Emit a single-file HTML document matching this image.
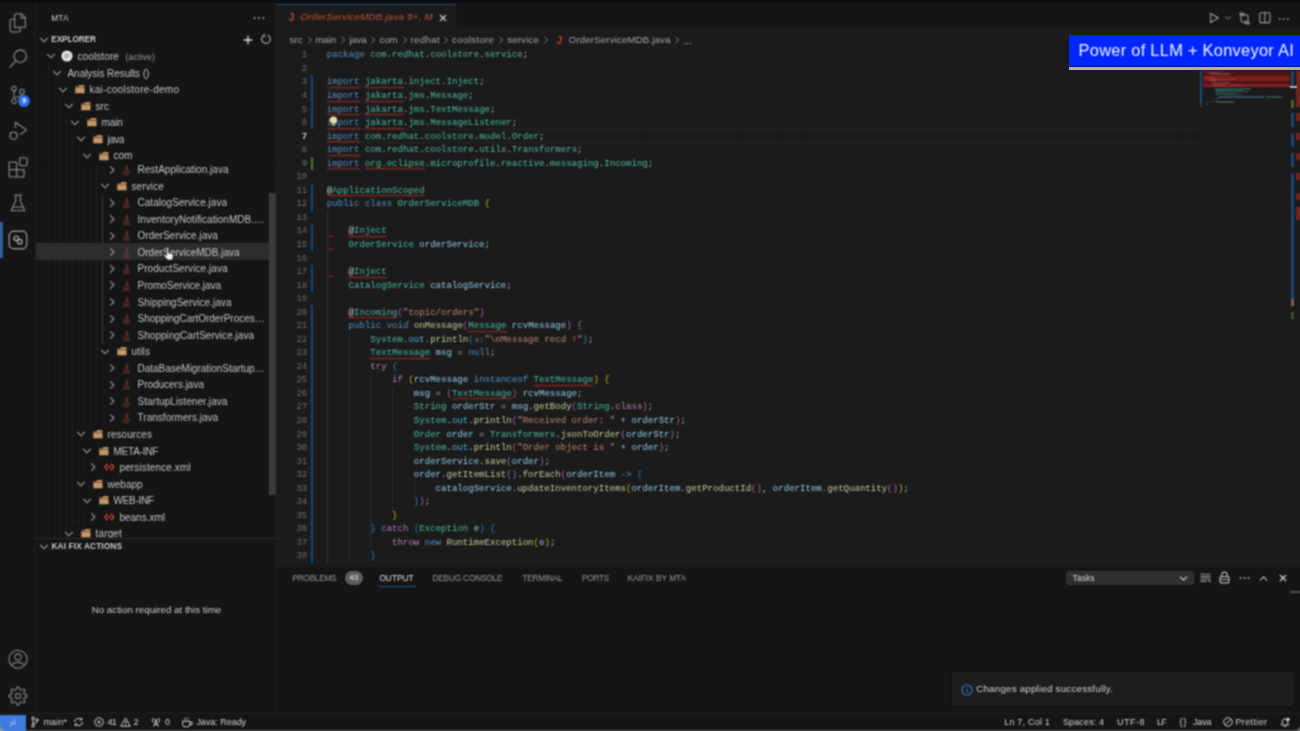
<!DOCTYPE html><html lang="en"><head><meta charset="utf-8"><title>OrderServiceMDB.java — kai-coolstore-demo</title><style>
*{box-sizing:border-box}
html,body{margin:0;padding:0}
#root{position:absolute;left:0;top:0;width:1300px;height:731px;overflow:hidden;filter:url(#bl)}
body{width:1300px;height:731px;overflow:hidden;position:relative;background:#1b1b1b;font-family:"Liberation Sans",sans-serif;color:#ccc;font-size:9.75px;line-height:1}
.abs{position:absolute}
.t{position:absolute;white-space:pre;line-height:12px;height:12px}
#act{left:0;top:3px;width:36px;height:711px;background:#151515;border-right:1px solid #1d1d1d}
#side{left:36px;top:3px;width:241px;height:711px;background:#151515;border-right:1px solid #1f1f1f;overflow:hidden}
#tabs{left:277px;top:3px;width:1023px;height:27px;background:#151515;border-bottom:1px solid #1d1d1d}
#tab{left:277px;top:4px;width:179px;height:26px;background:#1b1b1b;border-top:1.6px solid #154a7c;border-right:1px solid #1f1f1f}
#editor{left:277px;top:30px;width:1023px;height:536px;background:#1b1b1b;overflow:hidden}
#panel{left:277px;top:566px;width:1023px;height:148px;background:#151515;border-top:1px solid #1a1a1a}
#status{left:0;top:713px;width:1300px;height:18px;background:#151515;border-top:1px solid #1e1e1e}
.code{position:absolute;left:0;white-space:pre;opacity:.9;font-family:"Liberation Mono",monospace;font-size:9.07px;line-height:14px;height:14px;color:#c8c8c8}
.ln{position:absolute;width:30px;text-align:right;font-family:"Liberation Mono",monospace;font-size:9.07px;line-height:14px;height:14px;color:#666c74}
.k{color:#569cd6}.c{color:#c586c0}.ty{color:#4ec9b0}.v{color:#9cdcfe}.f{color:#dcdcaa}.s{color:#ce9178}.p{color:#ccc}
.b1{color:#dcbc10}.b2{color:#bc64b8}.b3{color:#1a8ce0}.n{color:#4fc1ff}
.sq{text-decoration:underline wavy #e5484d 1px;text-underline-offset:1.5px;text-decoration-skip-ink:none}
.ih{font-size:7.4px;color:#8a8a8a;background:#1f1f1f;border-radius:2px;padding:0 1px}
.row{position:absolute;left:0;width:240px;height:16.5px}
.row .lb{position:absolute;top:0;line-height:16.5px;white-space:pre;color:#ccc;font-size:9.75px}
svg{position:absolute;overflow:visible}
</style></head><body><svg width="0" height="0" style="position:absolute"><defs><filter id="bl" x="0" y="0" width="100%" height="100%" color-interpolation-filters="sRGB"><feConvolveMatrix order="3" kernelMatrix="0.0625 0.1250 0.0625 0.1250 0.2500 0.1250 0.0625 0.1250 0.0625" divisor="1" edgeMode="duplicate" preserveAlpha="true"/></filter></defs></svg><div id="root">
<div class="abs" style="left:0;top:0;width:1300px;height:3px;background:#0d0d0d"></div>
<div class="abs" id="act"><div class="abs" style="left:0;top:219px;width:2.5px;height:36px;background:#2a5f9a"></div>
<svg style="left:8.0px;top:9.0px" width="20" height="22" viewBox="0 0 20 22"><g fill="none" stroke="#7c7c7c" stroke-width="1.25" stroke-linejoin="round"><path d="M6.6 15.4 V3 a1.2 1.2 0 0 1 1.2 -1.2 h5.6 l4 4 v8.4 a1.2 1.2 0 0 1 -1.2 1.2 z"/><path d="M13.2 2 v4.2 h4.2"/><path d="M6.4 7 h-3 a1.2 1.2 0 0 0 -1.2 1.2 v10.4 a1.2 1.2 0 0 0 1.2 1.2 h7.6 a1.2 1.2 0 0 0 1.2 -1.2 V15.6"/></g></svg>
<svg style="left:8.0px;top:44.0px" width="22" height="22" viewBox="0 0 22 22"><g fill="none" stroke="#7c7c7c" stroke-width="1.3"><circle cx="12.3" cy="9.2" r="6.2"/><path d="M8 13.8 L2 20" stroke-linecap="round"/></g></svg>
<svg style="left:8.0px;top:81.0px" width="22" height="22" viewBox="0 0 22 22"><g fill="none" stroke="#7c7c7c" stroke-width="1.2"><circle cx="6" cy="4.6" r="2.3"/><circle cx="14" cy="7.7" r="2.3"/><circle cx="6" cy="17.3" r="2.3"/><path d="M6 7 V15 M14 10 c0 3.5 -8 2 -8 5"/></g></svg>
<div class="abs" style="left:18.3px;top:91.8px;width:12px;height:12px;border-radius:6px;background:#2f6fe6;color:#fff;font-size:7px;line-height:12px;text-align:center;font-weight:bold">9</div>
<svg style="left:8.0px;top:117.0px" width="22" height="22" viewBox="0 0 22 22"><g fill="none" stroke="#7c7c7c" stroke-width="1.3" stroke-linejoin="round"><path d="M7.4 8 V2.4 L18.6 10 L12 14.6"/><circle cx="5.6" cy="15.8" r="3.6"/><path d="M2 12.4 l1.4 1.2 M9.2 12.4 l-1.4 1.2 M1.4 16 h1 M9 16 h1"/></g></svg>
<svg style="left:8.0px;top:153.0px" width="22" height="22" viewBox="0 0 22 22"><g fill="none" stroke="#7c7c7c" stroke-width="1.3" stroke-linejoin="round"><rect x="11.6" y="1.8" width="7.6" height="7.8" rx="1.4"/><path d="M1.2 6.2 h7.4 v7.4 h7.4 v7.2 h-14.8z M1.2 13.6 h7.4 v7.2"/></g></svg>
<svg style="left:8.0px;top:189.0px" width="22" height="22" viewBox="0 0 22 22"><g fill="none" stroke="#7c7c7c" stroke-width="1.3" stroke-linejoin="round"><path d="M6.4 3.2 h7.2 M7.6 3.4 v5.6 l-4.4 9.6 h13.6 l-4.4 -9.6 v-5.6 M5 15.2 h10"/></g></svg>
<svg style="left:8.0px;top:227.0px" width="20" height="20" viewBox="0 0 20 20"><g fill="none" stroke="#8a8a8a" stroke-width="1.4"><rect x="1.3" y="1.3" width="17.4" height="17.4" rx="4"/></g><g fill="none" stroke="#b0b0b0" stroke-width="1.2"><circle cx="8.3" cy="8.3" r="2.3"/><circle cx="11.7" cy="11.7" r="2.3"/></g></svg>
<svg style="left:8.0px;top:646.0px" width="20" height="20" viewBox="0 0 20 20"><g fill="none" stroke="#7c7c7c" stroke-width="1.2"><circle cx="10" cy="10.3" r="9"/><circle cx="10" cy="8" r="3.2"/><path d="M3.8 16.6 c1.4 -4.4 11 -4.4 12.4 0"/></g></svg>
<svg style="left:8.0px;top:682.8px" width="20" height="20" viewBox="0 0 20 20"><g fill="none" stroke="#7c7c7c" stroke-width="1.2" stroke-linejoin="round"><polygon points="18.96,9.12 18.96,10.88 16.32,11.92 15.82,13.11 16.96,15.71 15.71,16.96 13.11,15.82 11.92,16.32 10.88,18.96 9.12,18.96 8.08,16.32 6.89,15.82 4.29,16.96 3.04,15.71 4.18,13.11 3.68,11.92 1.04,10.88 1.04,9.12 3.68,8.08 4.18,6.89 3.04,4.29 4.29,3.04 6.89,4.18 8.08,3.68 9.12,1.04 10.88,1.04 11.92,3.68 13.11,4.18 15.71,3.04 16.96,4.29 15.82,6.89 16.32,8.08"/><circle cx="10" cy="10" r="2.6"/></g></svg></div>
<div class="abs" id="side"><div class="abs" style="left:12.0px;top:61.5px;width:1px;height:473.5px;background:#1f1f1f"></div>
<div class="abs" style="left:18.0px;top:78.0px;width:1px;height:457.0px;background:#1f1f1f"></div>
<div class="abs" style="left:24.0px;top:94.7px;width:1px;height:440.3px;background:#1f1f1f"></div>
<div class="abs" style="left:30.0px;top:111.3px;width:1px;height:423.7px;background:#1f1f1f"></div>
<div class="abs" style="left:36.0px;top:127.8px;width:1px;height:394.2px;background:#1f1f1f"></div>
<div class="abs" style="left:42.0px;top:144.4px;width:1px;height:278.1px;background:#1f1f1f"></div>
<div class="abs" style="left:42.0px;top:439.0px;width:1px;height:33.0px;background:#1f1f1f"></div>
<div class="abs" style="left:42.0px;top:489.0px;width:1px;height:33.0px;background:#1f1f1f"></div>
<div class="abs" style="left:48.0px;top:161.0px;width:1px;height:261.5px;background:#1f1f1f"></div>
<div class="abs" style="left:48.0px;top:455.5px;width:1px;height:16.5px;background:#1f1f1f"></div>
<div class="abs" style="left:48.0px;top:505.5px;width:1px;height:16.5px;background:#1f1f1f"></div>
<div class="abs" style="left:54.0px;top:161.0px;width:1px;height:261.5px;background:#1f1f1f"></div>
<div class="abs" style="left:60.0px;top:161.0px;width:1px;height:261.5px;background:#1f1f1f"></div>
<div class="abs" style="left:66.0px;top:356.5px;width:1px;height:66.0px;background:#1f1f1f"></div>
<div class="abs" style="left:66.0px;top:191.5px;width:1px;height:149.0px;background:#3a3a3a"></div>
<div class="t" style="left:15.3px;top:9.6px;font-size:8.25px;color:#ccc;letter-spacing:.15px">MTA</div>
<svg style="left:217.0px;top:13.0px" width="12" height="4" viewBox="0 0 12 4"><circle cx="1.6" cy="2" r="0.9" fill="#aaa"/><circle cx="6" cy="2" r="0.9" fill="#aaa"/><circle cx="10.4" cy="2" r="0.9" fill="#aaa"/></svg>
<svg style="left:2.5px;top:32.6px" width="10" height="8" viewBox="0 0 10 8"><path d="M1.3 2 L5 5.8 L8.7 2" fill="none" stroke="#989898" stroke-width="1.1"/></svg>
<div class="t" style="left:15.3px;top:31.0px;font-size:8.25px;font-weight:bold;color:#ccc;letter-spacing:-0.11px">EXPLORER</div>
<svg style="left:206.5px;top:31.6px" width="10" height="10" viewBox="0 0 10 10"><path d="M5 0.8 V9.2 M0.8 5 H9.2" stroke="#ddd" stroke-width="1.3" fill="none"/></svg>
<svg style="left:223.5px;top:29.8px" width="12" height="12" viewBox="0 0 12 12"><path d="M7.6 2.1 A4.3 4.3 0 1 1 3.6 2.5" stroke="#aaa" stroke-width="1.1" fill="none"/><path d="M4.6 0.6 L3.3 2.8 L5.8 3.4" stroke="#aaa" stroke-width="1" fill="none"/></svg>
<div class="abs" style="left:0;top:240.3px;width:240px;height:16.6px;background:#2b2c2e"></div>
<div class="abs" style="left:0;top:160.0px;width:240px;height:375.0px;overflow:hidden">
<div class="abs" style="left:0;top:-160.0px;width:240px;height:600px">
<svg style="left:71.5px;top:161.5px" width="8" height="10" viewBox="0 0 8 10"><path d="M2.2 1.3 L5.9 5 L2.2 8.7" fill="none" stroke="#989898" stroke-width="1.1"/></svg><svg style="left:86.0px;top:161.0px" width="9" height="11" viewBox="0 0 9 11"><path d="M4.8 0.4 C6.2 2.2 2.8 3 4.2 5.4 M5.6 2.6 C6.8 3.8 4.4 4.4 5.4 6" fill="none" stroke="#8c3a2e" stroke-width="1"/><path d="M1.6 6.6 C3 7.3 6 7.3 7.4 6.6 M1.4 8.2 C3 9 6 9 7.6 8.2 M0.8 9.9 C3 10.8 6 10.8 8.2 9.9" fill="none" stroke="#7c382e" stroke-width="0.9"/></svg><div class="t" style="left:101.5px;top:161.1px;font-size:10px;color:#c4c4c4;letter-spacing:0.02px">RestApplication.java</div>
<svg style="left:63.5px;top:179.1px" width="10" height="8" viewBox="0 0 10 8"><path d="M1.3 2 L5 5.8 L8.7 2" fill="none" stroke="#989898" stroke-width="1.1"/></svg><svg style="left:80.7px;top:177.9px" width="10.2" height="10.2" viewBox="0 0 11 11"><path d="M0.3 2.6 h3.2 l1 -1.4 h5.6 v2.6 h-9.8z" fill="#b88c5e"/><path d="M0.3 4.2 h10 v5.8 h-10z" fill="#c59868"/><path d="M0.3 4 h10" stroke="#8a6a48" stroke-width="0.6"/></svg><div class="t" style="left:95.5px;top:177.7px;font-size:10px;color:#c4c4c4;letter-spacing:0.12px">service</div>
<svg style="left:71.5px;top:194.6px" width="8" height="10" viewBox="0 0 8 10"><path d="M2.2 1.3 L5.9 5 L2.2 8.7" fill="none" stroke="#989898" stroke-width="1.1"/></svg><svg style="left:86.0px;top:194.1px" width="9" height="11" viewBox="0 0 9 11"><path d="M4.8 0.4 C6.2 2.2 2.8 3 4.2 5.4 M5.6 2.6 C6.8 3.8 4.4 4.4 5.4 6" fill="none" stroke="#8c3a2e" stroke-width="1"/><path d="M1.6 6.6 C3 7.3 6 7.3 7.4 6.6 M1.4 8.2 C3 9 6 9 7.6 8.2 M0.8 9.9 C3 10.8 6 10.8 8.2 9.9" fill="none" stroke="#7c382e" stroke-width="0.9"/></svg><div class="t" style="left:101.5px;top:194.2px;font-size:10px;color:#c4c4c4;letter-spacing:0.03px">CatalogService.java</div>
<svg style="left:71.5px;top:211.2px" width="8" height="10" viewBox="0 0 8 10"><path d="M2.2 1.3 L5.9 5 L2.2 8.7" fill="none" stroke="#989898" stroke-width="1.1"/></svg><svg style="left:86.0px;top:210.7px" width="9" height="11" viewBox="0 0 9 11"><path d="M4.8 0.4 C6.2 2.2 2.8 3 4.2 5.4 M5.6 2.6 C6.8 3.8 4.4 4.4 5.4 6" fill="none" stroke="#8c3a2e" stroke-width="1"/><path d="M1.6 6.6 C3 7.3 6 7.3 7.4 6.6 M1.4 8.2 C3 9 6 9 7.6 8.2 M0.8 9.9 C3 10.8 6 10.8 8.2 9.9" fill="none" stroke="#7c382e" stroke-width="0.9"/></svg><div class="t" style="left:101.5px;top:210.8px;font-size:10px;color:#c4c4c4;letter-spacing:0.04px">InventoryNotificationMDB.…</div>
<svg style="left:71.5px;top:227.7px" width="8" height="10" viewBox="0 0 8 10"><path d="M2.2 1.3 L5.9 5 L2.2 8.7" fill="none" stroke="#989898" stroke-width="1.1"/></svg><svg style="left:86.0px;top:227.2px" width="9" height="11" viewBox="0 0 9 11"><path d="M4.8 0.4 C6.2 2.2 2.8 3 4.2 5.4 M5.6 2.6 C6.8 3.8 4.4 4.4 5.4 6" fill="none" stroke="#8c3a2e" stroke-width="1"/><path d="M1.6 6.6 C3 7.3 6 7.3 7.4 6.6 M1.4 8.2 C3 9 6 9 7.6 8.2 M0.8 9.9 C3 10.8 6 10.8 8.2 9.9" fill="none" stroke="#7c382e" stroke-width="0.9"/></svg><div class="t" style="left:101.5px;top:227.3px;font-size:10px;color:#c4c4c4;letter-spacing:0.02px">OrderService.java</div>
<svg style="left:71.5px;top:244.3px" width="8" height="10" viewBox="0 0 8 10"><path d="M2.2 1.3 L5.9 5 L2.2 8.7" fill="none" stroke="#989898" stroke-width="1.1"/></svg><svg style="left:86.0px;top:243.8px" width="9" height="11" viewBox="0 0 9 11"><path d="M4.8 0.4 C6.2 2.2 2.8 3 4.2 5.4 M5.6 2.6 C6.8 3.8 4.4 4.4 5.4 6" fill="none" stroke="#8c3a2e" stroke-width="1"/><path d="M1.6 6.6 C3 7.3 6 7.3 7.4 6.6 M1.4 8.2 C3 9 6 9 7.6 8.2 M0.8 9.9 C3 10.8 6 10.8 8.2 9.9" fill="none" stroke="#7c382e" stroke-width="0.9"/></svg><div class="t" style="left:101.5px;top:243.9px;font-size:10px;color:#c4c4c4;letter-spacing:-0.01px">OrderServiceMDB.java</div>
<svg style="left:71.5px;top:260.8px" width="8" height="10" viewBox="0 0 8 10"><path d="M2.2 1.3 L5.9 5 L2.2 8.7" fill="none" stroke="#989898" stroke-width="1.1"/></svg><svg style="left:86.0px;top:260.3px" width="9" height="11" viewBox="0 0 9 11"><path d="M4.8 0.4 C6.2 2.2 2.8 3 4.2 5.4 M5.6 2.6 C6.8 3.8 4.4 4.4 5.4 6" fill="none" stroke="#8c3a2e" stroke-width="1"/><path d="M1.6 6.6 C3 7.3 6 7.3 7.4 6.6 M1.4 8.2 C3 9 6 9 7.6 8.2 M0.8 9.9 C3 10.8 6 10.8 8.2 9.9" fill="none" stroke="#7c382e" stroke-width="0.9"/></svg><div class="t" style="left:101.5px;top:260.4px;font-size:10px;color:#c4c4c4;letter-spacing:0.06px">ProductService.java</div>
<svg style="left:71.5px;top:277.4px" width="8" height="10" viewBox="0 0 8 10"><path d="M2.2 1.3 L5.9 5 L2.2 8.7" fill="none" stroke="#989898" stroke-width="1.1"/></svg><svg style="left:86.0px;top:276.9px" width="9" height="11" viewBox="0 0 9 11"><path d="M4.8 0.4 C6.2 2.2 2.8 3 4.2 5.4 M5.6 2.6 C6.8 3.8 4.4 4.4 5.4 6" fill="none" stroke="#8c3a2e" stroke-width="1"/><path d="M1.6 6.6 C3 7.3 6 7.3 7.4 6.6 M1.4 8.2 C3 9 6 9 7.6 8.2 M0.8 9.9 C3 10.8 6 10.8 8.2 9.9" fill="none" stroke="#7c382e" stroke-width="0.9"/></svg><div class="t" style="left:101.5px;top:277.0px;font-size:10px;color:#c4c4c4;letter-spacing:-0.03px">PromoService.java</div>
<svg style="left:71.5px;top:293.9px" width="8" height="10" viewBox="0 0 8 10"><path d="M2.2 1.3 L5.9 5 L2.2 8.7" fill="none" stroke="#989898" stroke-width="1.1"/></svg><svg style="left:86.0px;top:293.4px" width="9" height="11" viewBox="0 0 9 11"><path d="M4.8 0.4 C6.2 2.2 2.8 3 4.2 5.4 M5.6 2.6 C6.8 3.8 4.4 4.4 5.4 6" fill="none" stroke="#8c3a2e" stroke-width="1"/><path d="M1.6 6.6 C3 7.3 6 7.3 7.4 6.6 M1.4 8.2 C3 9 6 9 7.6 8.2 M0.8 9.9 C3 10.8 6 10.8 8.2 9.9" fill="none" stroke="#7c382e" stroke-width="0.9"/></svg><div class="t" style="left:101.5px;top:293.5px;font-size:10px;color:#c4c4c4;letter-spacing:0.03px">ShippingService.java</div>
<svg style="left:71.5px;top:310.5px" width="8" height="10" viewBox="0 0 8 10"><path d="M2.2 1.3 L5.9 5 L2.2 8.7" fill="none" stroke="#989898" stroke-width="1.1"/></svg><svg style="left:86.0px;top:310.0px" width="9" height="11" viewBox="0 0 9 11"><path d="M4.8 0.4 C6.2 2.2 2.8 3 4.2 5.4 M5.6 2.6 C6.8 3.8 4.4 4.4 5.4 6" fill="none" stroke="#8c3a2e" stroke-width="1"/><path d="M1.6 6.6 C3 7.3 6 7.3 7.4 6.6 M1.4 8.2 C3 9 6 9 7.6 8.2 M0.8 9.9 C3 10.8 6 10.8 8.2 9.9" fill="none" stroke="#7c382e" stroke-width="0.9"/></svg><div class="t" style="left:101.5px;top:310.1px;font-size:10px;color:#c4c4c4;letter-spacing:-0.03px">ShoppingCartOrderProces…</div>
<svg style="left:71.5px;top:327.0px" width="8" height="10" viewBox="0 0 8 10"><path d="M2.2 1.3 L5.9 5 L2.2 8.7" fill="none" stroke="#989898" stroke-width="1.1"/></svg><svg style="left:86.0px;top:326.5px" width="9" height="11" viewBox="0 0 9 11"><path d="M4.8 0.4 C6.2 2.2 2.8 3 4.2 5.4 M5.6 2.6 C6.8 3.8 4.4 4.4 5.4 6" fill="none" stroke="#8c3a2e" stroke-width="1"/><path d="M1.6 6.6 C3 7.3 6 7.3 7.4 6.6 M1.4 8.2 C3 9 6 9 7.6 8.2 M0.8 9.9 C3 10.8 6 10.8 8.2 9.9" fill="none" stroke="#7c382e" stroke-width="0.9"/></svg><div class="t" style="left:101.5px;top:326.6px;font-size:10px;color:#c4c4c4;letter-spacing:0.04px">ShoppingCartService.java</div>
<svg style="left:63.5px;top:344.6px" width="10" height="8" viewBox="0 0 10 8"><path d="M1.3 2 L5 5.8 L8.7 2" fill="none" stroke="#989898" stroke-width="1.1"/></svg><svg style="left:80.7px;top:343.4px" width="10.2" height="10.2" viewBox="0 0 11 11"><path d="M0.3 2.6 h3.2 l1 -1.4 h5.6 v2.6 h-9.8z" fill="#b88c5e"/><path d="M0.3 4.2 h10 v5.8 h-10z" fill="#c59868"/><path d="M0.3 4 h10" stroke="#8a6a48" stroke-width="0.6"/></svg><div class="t" style="left:95.5px;top:343.2px;font-size:10px;color:#c4c4c4;letter-spacing:0.15px">utils</div>
<svg style="left:71.5px;top:360.1px" width="8" height="10" viewBox="0 0 8 10"><path d="M2.2 1.3 L5.9 5 L2.2 8.7" fill="none" stroke="#989898" stroke-width="1.1"/></svg><svg style="left:86.0px;top:359.6px" width="9" height="11" viewBox="0 0 9 11"><path d="M4.8 0.4 C6.2 2.2 2.8 3 4.2 5.4 M5.6 2.6 C6.8 3.8 4.4 4.4 5.4 6" fill="none" stroke="#8c3a2e" stroke-width="1"/><path d="M1.6 6.6 C3 7.3 6 7.3 7.4 6.6 M1.4 8.2 C3 9 6 9 7.6 8.2 M0.8 9.9 C3 10.8 6 10.8 8.2 9.9" fill="none" stroke="#7c382e" stroke-width="0.9"/></svg><div class="t" style="left:101.5px;top:359.7px;font-size:10px;color:#c4c4c4;letter-spacing:-0.01px">DataBaseMigrationStartup…</div>
<svg style="left:71.5px;top:376.7px" width="8" height="10" viewBox="0 0 8 10"><path d="M2.2 1.3 L5.9 5 L2.2 8.7" fill="none" stroke="#989898" stroke-width="1.1"/></svg><svg style="left:86.0px;top:376.2px" width="9" height="11" viewBox="0 0 9 11"><path d="M4.8 0.4 C6.2 2.2 2.8 3 4.2 5.4 M5.6 2.6 C6.8 3.8 4.4 4.4 5.4 6" fill="none" stroke="#8c3a2e" stroke-width="1"/><path d="M1.6 6.6 C3 7.3 6 7.3 7.4 6.6 M1.4 8.2 C3 9 6 9 7.6 8.2 M0.8 9.9 C3 10.8 6 10.8 8.2 9.9" fill="none" stroke="#7c382e" stroke-width="0.9"/></svg><div class="t" style="left:101.5px;top:376.3px;font-size:10px;color:#c4c4c4;letter-spacing:-0.02px">Producers.java</div>
<svg style="left:71.5px;top:393.2px" width="8" height="10" viewBox="0 0 8 10"><path d="M2.2 1.3 L5.9 5 L2.2 8.7" fill="none" stroke="#989898" stroke-width="1.1"/></svg><svg style="left:86.0px;top:392.7px" width="9" height="11" viewBox="0 0 9 11"><path d="M4.8 0.4 C6.2 2.2 2.8 3 4.2 5.4 M5.6 2.6 C6.8 3.8 4.4 4.4 5.4 6" fill="none" stroke="#8c3a2e" stroke-width="1"/><path d="M1.6 6.6 C3 7.3 6 7.3 7.4 6.6 M1.4 8.2 C3 9 6 9 7.6 8.2 M0.8 9.9 C3 10.8 6 10.8 8.2 9.9" fill="none" stroke="#7c382e" stroke-width="0.9"/></svg><div class="t" style="left:101.5px;top:392.8px;font-size:10px;color:#c4c4c4;letter-spacing:0.08px">StartupListener.java</div>
<svg style="left:71.5px;top:409.8px" width="8" height="10" viewBox="0 0 8 10"><path d="M2.2 1.3 L5.9 5 L2.2 8.7" fill="none" stroke="#989898" stroke-width="1.1"/></svg><svg style="left:86.0px;top:409.3px" width="9" height="11" viewBox="0 0 9 11"><path d="M4.8 0.4 C6.2 2.2 2.8 3 4.2 5.4 M5.6 2.6 C6.8 3.8 4.4 4.4 5.4 6" fill="none" stroke="#8c3a2e" stroke-width="1"/><path d="M1.6 6.6 C3 7.3 6 7.3 7.4 6.6 M1.4 8.2 C3 9 6 9 7.6 8.2 M0.8 9.9 C3 10.8 6 10.8 8.2 9.9" fill="none" stroke="#7c382e" stroke-width="0.9"/></svg><div class="t" style="left:101.5px;top:409.4px;font-size:10px;color:#c4c4c4;letter-spacing:0.03px">Transformers.java</div>
<svg style="left:39.5px;top:427.3px" width="10" height="8" viewBox="0 0 10 8"><path d="M1.3 2 L5 5.8 L8.7 2" fill="none" stroke="#989898" stroke-width="1.1"/></svg><svg style="left:56.7px;top:426.1px" width="10.2" height="10.2" viewBox="0 0 11 11"><path d="M0.3 2.6 h3.2 l1 -1.4 h5.6 v2.6 h-9.8z" fill="#b88c5e"/><path d="M0.3 4.2 h10 v5.8 h-10z" fill="#c59868"/><path d="M0.3 4 h10" stroke="#8a6a48" stroke-width="0.6"/></svg><div class="t" style="left:71.5px;top:425.9px;font-size:10px;color:#c4c4c4;letter-spacing:0.06px">resources</div>
<svg style="left:45.5px;top:443.9px" width="10" height="8" viewBox="0 0 10 8"><path d="M1.3 2 L5 5.8 L8.7 2" fill="none" stroke="#989898" stroke-width="1.1"/></svg><svg style="left:62.7px;top:442.7px" width="10.2" height="10.2" viewBox="0 0 11 11"><path d="M0.3 2.6 h3.2 l1 -1.4 h5.6 v2.6 h-9.8z" fill="#b88c5e"/><path d="M0.3 4.2 h10 v5.8 h-10z" fill="#c59868"/><path d="M0.3 4 h10" stroke="#8a6a48" stroke-width="0.6"/></svg><div class="t" style="left:77.5px;top:442.5px;font-size:10px;color:#c4c4c4;letter-spacing:-0.23px">META-INF</div>
<svg style="left:52.5px;top:459.4px" width="8" height="10" viewBox="0 0 8 10"><path d="M2.2 1.3 L5.9 5 L2.2 8.7" fill="none" stroke="#989898" stroke-width="1.1"/></svg><svg style="left:67.7px;top:460.4px" width="10.6" height="8" viewBox="0 0 12 8" preserveAspectRatio="none"><path d="M4.2 0.8 L1 4 L4.2 7.2 M7.8 0.8 L11 4 L7.8 7.2" fill="none" stroke="#d4402b" stroke-width="1.5"/><circle cx="6" cy="4" r="1.3" fill="#d4402b"/></svg><div class="t" style="left:83.5px;top:459.0px;font-size:10px;color:#c4c4c4;letter-spacing:0.12px">persistence.xml</div>
<svg style="left:39.5px;top:477.0px" width="10" height="8" viewBox="0 0 10 8"><path d="M1.3 2 L5 5.8 L8.7 2" fill="none" stroke="#989898" stroke-width="1.1"/></svg><svg style="left:56.7px;top:475.8px" width="10.2" height="10.2" viewBox="0 0 11 11"><path d="M0.3 2.6 h3.2 l1 -1.4 h5.6 v2.6 h-9.8z" fill="#b88c5e"/><path d="M0.3 4.2 h10 v5.8 h-10z" fill="#c59868"/><path d="M0.3 4 h10" stroke="#8a6a48" stroke-width="0.6"/></svg><div class="t" style="left:71.5px;top:475.6px;font-size:10px;color:#c4c4c4;letter-spacing:0.03px">webapp</div>
<svg style="left:45.5px;top:493.5px" width="10" height="8" viewBox="0 0 10 8"><path d="M1.3 2 L5 5.8 L8.7 2" fill="none" stroke="#989898" stroke-width="1.1"/></svg><svg style="left:62.7px;top:492.3px" width="10.2" height="10.2" viewBox="0 0 11 11"><path d="M0.3 2.6 h3.2 l1 -1.4 h5.6 v2.6 h-9.8z" fill="#b88c5e"/><path d="M0.3 4.2 h10 v5.8 h-10z" fill="#c59868"/><path d="M0.3 4 h10" stroke="#8a6a48" stroke-width="0.6"/></svg><div class="t" style="left:77.5px;top:492.1px;font-size:10px;color:#c4c4c4;letter-spacing:-0.30px">WEB-INF</div>
<svg style="left:52.5px;top:509.1px" width="8" height="10" viewBox="0 0 8 10"><path d="M2.2 1.3 L5.9 5 L2.2 8.7" fill="none" stroke="#989898" stroke-width="1.1"/></svg><svg style="left:67.7px;top:510.1px" width="10.6" height="8" viewBox="0 0 12 8" preserveAspectRatio="none"><path d="M4.2 0.8 L1 4 L4.2 7.2 M7.8 0.8 L11 4 L7.8 7.2" fill="none" stroke="#d4402b" stroke-width="1.5"/><circle cx="6" cy="4" r="1.3" fill="#d4402b"/></svg><div class="t" style="left:83.5px;top:508.7px;font-size:10px;color:#c4c4c4;letter-spacing:-0.02px">beans.xml</div>
<svg style="left:27.5px;top:526.6px" width="10" height="8" viewBox="0 0 10 8"><path d="M1.3 2 L5 5.8 L8.7 2" fill="none" stroke="#989898" stroke-width="1.1"/></svg><svg style="left:44.7px;top:525.4px" width="10.2" height="10.2" viewBox="0 0 11 11"><path d="M0.3 2.6 h3.2 l1 -1.4 h5.6 v2.6 h-9.8z" fill="#b88c5e"/><path d="M0.3 4.2 h10 v5.8 h-10z" fill="#c59868"/><path d="M0.3 4 h10" stroke="#8a6a48" stroke-width="0.6"/></svg><div class="t" style="left:59.5px;top:525.2px;font-size:10px;color:#c4c4c4;letter-spacing:0.16px">target</div>
</div></div>
<svg style="left:9.5px;top:49.3px" width="10" height="8" viewBox="0 0 10 8"><path d="M1.3 2 L5 5.8 L8.7 2" fill="none" stroke="#989898" stroke-width="1.1"/></svg><svg style="left:25.0px;top:47.3px" width="12" height="12" viewBox="0 0 12 12"><circle cx="6" cy="6" r="5.6" fill="#e4e4e4"/><path d="M3.6 4.6h4.8M3.6 6.2h4.8M3.6 7.8h3" stroke="#777" stroke-width="0.8"/></svg><div class="t" style="left:41.5px;top:47.9px;font-size:10px;color:#c4c4c4;letter-spacing:0.10px">coolstore</div><div class="t" style="left:89.4px;top:48.1px;font-size:8.8px;color:#9a9a9a;letter-spacing:0.11px">(active)</div>
<svg style="left:15.5px;top:65.9px" width="10" height="8" viewBox="0 0 10 8"><path d="M1.3 2 L5 5.8 L8.7 2" fill="none" stroke="#989898" stroke-width="1.1"/></svg><div class="t" style="left:31.5px;top:64.5px;font-size:10px;color:#c4c4c4;letter-spacing:-0.05px">Analysis Results ()</div>
<svg style="left:21.5px;top:82.5px" width="10" height="8" viewBox="0 0 10 8"><path d="M1.3 2 L5 5.8 L8.7 2" fill="none" stroke="#989898" stroke-width="1.1"/></svg><svg style="left:38.7px;top:81.3px" width="10.2" height="10.2" viewBox="0 0 11 11"><path d="M0.3 2.6 h3.2 l1 -1.4 h5.6 v2.6 h-9.8z" fill="#b88c5e"/><path d="M0.3 4.2 h10 v5.8 h-10z" fill="#c59868"/><path d="M0.3 4 h10" stroke="#8a6a48" stroke-width="0.6"/></svg><div class="t" style="left:53.5px;top:81.1px;font-size:10px;color:#c4c4c4;letter-spacing:0.26px">kai-coolstore-demo</div>
<svg style="left:27.5px;top:99.0px" width="10" height="8" viewBox="0 0 10 8"><path d="M1.3 2 L5 5.8 L8.7 2" fill="none" stroke="#989898" stroke-width="1.1"/></svg><svg style="left:44.7px;top:97.8px" width="10.2" height="10.2" viewBox="0 0 11 11"><path d="M0.3 2.6 h3.2 l1 -1.4 h5.6 v2.6 h-9.8z" fill="#b88c5e"/><path d="M0.3 4.2 h10 v5.8 h-10z" fill="#c59868"/><path d="M0.3 4 h10" stroke="#8a6a48" stroke-width="0.6"/></svg><div class="t" style="left:59.5px;top:97.6px;font-size:10px;color:#c4c4c4;letter-spacing:0.03px">src</div>
<svg style="left:33.5px;top:115.6px" width="10" height="8" viewBox="0 0 10 8"><path d="M1.3 2 L5 5.8 L8.7 2" fill="none" stroke="#989898" stroke-width="1.1"/></svg><svg style="left:50.7px;top:114.4px" width="10.2" height="10.2" viewBox="0 0 11 11"><path d="M0.3 2.6 h3.2 l1 -1.4 h5.6 v2.6 h-9.8z" fill="#b88c5e"/><path d="M0.3 4.2 h10 v5.8 h-10z" fill="#c59868"/><path d="M0.3 4 h10" stroke="#8a6a48" stroke-width="0.6"/></svg><div class="t" style="left:65.5px;top:114.2px;font-size:10px;color:#c4c4c4;letter-spacing:-0.10px">main</div>
<svg style="left:39.5px;top:132.2px" width="10" height="8" viewBox="0 0 10 8"><path d="M1.3 2 L5 5.8 L8.7 2" fill="none" stroke="#989898" stroke-width="1.1"/></svg><svg style="left:56.7px;top:131.0px" width="10.2" height="10.2" viewBox="0 0 11 11"><path d="M0.3 2.6 h3.2 l1 -1.4 h5.6 v2.6 h-9.8z" fill="#b88c5e"/><path d="M0.3 4.2 h10 v5.8 h-10z" fill="#c59868"/><path d="M0.3 4 h10" stroke="#8a6a48" stroke-width="0.6"/></svg><div class="t" style="left:71.5px;top:130.8px;font-size:10px;color:#c4c4c4;letter-spacing:-0.49px">java</div>
<svg style="left:45.5px;top:148.8px" width="10" height="8" viewBox="0 0 10 8"><path d="M1.3 2 L5 5.8 L8.7 2" fill="none" stroke="#989898" stroke-width="1.1"/></svg><svg style="left:62.7px;top:147.6px" width="10.2" height="10.2" viewBox="0 0 11 11"><path d="M0.3 2.6 h3.2 l1 -1.4 h5.6 v2.6 h-9.8z" fill="#b88c5e"/><path d="M0.3 4.2 h10 v5.8 h-10z" fill="#c59868"/><path d="M0.3 4 h10" stroke="#8a6a48" stroke-width="0.6"/></svg><div class="t" style="left:77.5px;top:147.4px;font-size:10px;color:#c4c4c4;letter-spacing:-0.00px">com</div>
<div class="abs" style="left:0;top:161.0px;width:240px;height:1px;background:#101010"></div>
<div class="abs" style="left:233px;top:190px;width:7px;height:302px;background:#3b3b3b"></div>
<div class="abs" style="left:0;top:535.0px;width:240px;height:1px;background:#2a2a2a"></div>
<svg style="left:2.5px;top:539.6px" width="10" height="8" viewBox="0 0 10 8"><path d="M1.3 2 L5 5.8 L8.7 2" fill="none" stroke="#989898" stroke-width="1.1"/></svg>
<div class="t" style="left:15.5px;top:537.6px;font-size:8.25px;font-weight:bold;color:#ccc;letter-spacing:0.14px">KAI FIX ACTIONS</div>
<div class="t" style="left:55.7px;top:600.7px;font-size:9.75px;color:#ccc">No action required at this time</div></div>
<div class="abs" id="tabs"></div>
<div class="abs" id="tab"><div class="t" style="left:11.6px;top:6.3px;font-size:10.6px;font-weight:bold;color:#c43c2e">J</div>
<div class="t" style="left:23.3px;top:6.2px;font-size:9.75px;font-style:italic;color:#c0503f;letter-spacing:0.21px">OrderServiceMDB.java 9+, M</div>
<svg style="left:161.7px;top:8.6px" width="8" height="8" viewBox="0 0 8 8"><path d="M1 1 L7 7 M7 1 L1 7" stroke="#d0d0d0" stroke-width="1.1" fill="none"/></svg></div>
<svg style="left:1208.0px;top:12.0px" width="12" height="12" viewBox="0 0 12 12"><path d="M2.6 1.6 V10.4 L10.4 6z" fill="none" stroke="#9c9c9c" stroke-width="1.1" stroke-linejoin="round"/></svg>
<svg style="left:1223.5px;top:15.0px" width="8" height="6" viewBox="0 0 8 6"><path d="M1.2 1.4 L4 4.2 L6.8 1.4" fill="none" stroke="#8a8a8a" stroke-width="1"/></svg>
<svg style="left:1237.5px;top:12.0px" width="13" height="13" viewBox="0 0 13 13"><g fill="none" stroke="#9c9c9c" stroke-width="1.1"><path d="M3 2.4 V8.6 a1.6 1.6 0 0 0 1.6 1.6 h3.6 M10 10.6 V4.4 a1.6 1.6 0 0 0 -1.6 -1.6 h-3.6"/><circle cx="3" cy="1.8" r="1.1"/><circle cx="10" cy="11.2" r="1.1"/><path d="M6.4 1 L4.6 2.8 L6.4 4.6 M6.6 8.4 L8.4 10.2 L6.6 12"/></g></svg>
<svg style="left:1258.5px;top:12.0px" width="12" height="12" viewBox="0 0 12 12"><g fill="none" stroke="#9c9c9c" stroke-width="1.1"><rect x="0.8" y="0.8" width="10.2" height="9.8" rx="1.2"/><path d="M5.9 0.8 V10.6"/></g></svg>
<svg style="left:1278.0px;top:16.5px" width="12" height="4" viewBox="0 0 12 4"><circle cx="1.6" cy="2" r="0.9" fill="#9c9c9c"/><circle cx="5.6" cy="2" r="0.9" fill="#9c9c9c"/><circle cx="9.6" cy="2" r="0.9" fill="#9c9c9c"/></svg>
<div class="abs" id="editor"><div class="abs" style="left:49.8px;top:99.47px;width:875px;height:13.54px;border-top:1px dashed #2c2c2c;border-bottom:1px dashed #2c2c2c"></div>
<div class="t" style="left:12.4px;top:4.1px;font-size:9.75px;color:#a4a4a4;letter-spacing:0.10px">src</div>
<div class="t" style="left:38.4px;top:4.1px;font-size:9.75px;color:#a4a4a4;letter-spacing:-0.15px">main</div>
<div class="t" style="left:72.4px;top:4.1px;font-size:9.75px;color:#a4a4a4;letter-spacing:-0.23px">java</div>
<div class="t" style="left:102.4px;top:4.1px;font-size:9.75px;color:#a4a4a4;letter-spacing:-0.11px">com</div>
<div class="t" style="left:133.4px;top:4.1px;font-size:9.75px;color:#a4a4a4;letter-spacing:0.31px">redhat</div>
<div class="t" style="left:175.1px;top:4.1px;font-size:9.75px;color:#a4a4a4;letter-spacing:0.28px">coolstore</div>
<div class="t" style="left:230.2px;top:4.1px;font-size:9.75px;color:#a4a4a4;letter-spacing:0.13px">service</div>
<div class="t" style="left:291.8px;top:4.1px;font-size:9.75px;color:#a4a4a4;letter-spacing:0.10px">OrderServiceMDB.java</div>
<svg style="left:30.0px;top:6.3px" width="6" height="8" viewBox="0 0 6 8"><path d="M1.4 0.8 L4.6 4 L1.4 7.2" fill="none" stroke="#8c8c8c" stroke-width="0.95"/></svg>
<svg style="left:63.0px;top:6.3px" width="6" height="8" viewBox="0 0 6 8"><path d="M1.4 0.8 L4.6 4 L1.4 7.2" fill="none" stroke="#8c8c8c" stroke-width="0.95"/></svg>
<svg style="left:93.0px;top:6.3px" width="6" height="8" viewBox="0 0 6 8"><path d="M1.4 0.8 L4.6 4 L1.4 7.2" fill="none" stroke="#8c8c8c" stroke-width="0.95"/></svg>
<svg style="left:125.0px;top:6.3px" width="6" height="8" viewBox="0 0 6 8"><path d="M1.4 0.8 L4.6 4 L1.4 7.2" fill="none" stroke="#8c8c8c" stroke-width="0.95"/></svg>
<svg style="left:166.0px;top:6.3px" width="6" height="8" viewBox="0 0 6 8"><path d="M1.4 0.8 L4.6 4 L1.4 7.2" fill="none" stroke="#8c8c8c" stroke-width="0.95"/></svg>
<svg style="left:221.0px;top:6.3px" width="6" height="8" viewBox="0 0 6 8"><path d="M1.4 0.8 L4.6 4 L1.4 7.2" fill="none" stroke="#8c8c8c" stroke-width="0.95"/></svg>
<svg style="left:266.0px;top:6.3px" width="6" height="8" viewBox="0 0 6 8"><path d="M1.4 0.8 L4.6 4 L1.4 7.2" fill="none" stroke="#8c8c8c" stroke-width="0.95"/></svg>
<svg style="left:397.4px;top:6.3px" width="6" height="8" viewBox="0 0 6 8"><path d="M1.4 0.8 L4.6 4 L1.4 7.2" fill="none" stroke="#8c8c8c" stroke-width="0.95"/></svg>
<div class="t" style="left:279.4px;top:4.0px;font-size:10.6px;font-weight:bold;color:#c43c2e">J</div>
<svg style="left:406.5px;top:11.8px" width="7.4" height="3" viewBox="0 0 9 3" preserveAspectRatio="none"><circle cx="1.2" cy="1.5" r="0.8" fill="#a0a0a0"/><circle cx="4.4" cy="1.5" r="0.8" fill="#a0a0a0"/><circle cx="7.6" cy="1.5" r="0.8" fill="#a0a0a0"/></svg>
<div class="abs" style="left:49.8px;top:180.71px;width:1px;height:352.04px;background:#343434"></div>
<div class="abs" style="left:71.6px;top:302.57px;width:1px;height:230.18px;background:#2c2c2c"></div>
<div class="abs" style="left:93.3px;top:343.19px;width:1px;height:176.02px;background:#2c2c2c"></div>
<div class="abs" style="left:115.1px;top:356.73px;width:1px;height:121.86px;background:#2c2c2c"></div>
<div class="abs" style="left:136.9px;top:451.51px;width:1px;height:13.54px;background:#2c2c2c"></div>
<div class="abs" style="left:33.6px;top:45.31px;width:2.6px;height:54.16px;background:#17466f"></div>
<div class="abs" style="left:33.6px;top:153.63px;width:2.6px;height:27.08px;background:#17466f"></div>
<div class="abs" style="left:33.6px;top:194.25px;width:2.6px;height:27.08px;background:#17466f"></div>
<div class="abs" style="left:33.6px;top:234.87px;width:2.6px;height:27.08px;background:#17466f"></div>
<div class="abs" style="left:33.6px;top:275.49px;width:2.6px;height:257.26px;background:#17466f"></div>
<div class="abs" style="left:33.6px;top:126.55px;width:2.6px;height:13.54px;background:#4a7236"></div>
<div class="ln" style="left:0.3px;top:18px;">1</div>
<div class="code" style="left:49.8px;top:18px"><span class="k">package</span><span class="p"> </span><span class="ty">com</span><span class="p">.</span><span class="ty">redhat</span><span class="p">.</span><span class="ty">coolstore</span><span class="p">.</span><span class="ty">service</span><span class="p">;</span></div>
<div class="ln" style="left:0.3px;top:32px;">2</div>
<div class="ln" style="left:0.3px;top:45px;">3</div>
<div class="code" style="left:49.8px;top:45px"><span class="k">import</span><span class="p"> </span><span class="ty">jakarta</span><span class="p">.</span><span class="ty">inject</span><span class="p">.</span><span class="ty">Inject</span><span class="p">;</span></div>
<svg style="left:49.5px;top:55.98px" width="33.6" height="3.2"><polyline points="0.0,0.7 1.5,2.5 3.0,0.7 4.5,2.5 6.0,0.7 7.5,2.5 9.0,0.7 10.5,2.5 12.0,0.7 13.5,2.5 15.0,0.7 16.5,2.5 18.0,0.7 19.5,2.5 21.0,0.7 22.5,2.5 24.0,0.7 25.5,2.5 27.0,0.7 28.5,2.5 30.0,0.7 31.5,2.5 33.0,0.7" fill="none" stroke="#b82e2a" stroke-width="0.85"/></svg>
<svg style="left:87.6px;top:55.98px" width="39.0" height="3.2"><polyline points="0.0,0.7 1.5,2.5 3.0,0.7 4.5,2.5 6.0,0.7 7.5,2.5 9.0,0.7 10.5,2.5 12.0,0.7 13.5,2.5 15.0,0.7 16.5,2.5 18.0,0.7 19.5,2.5 21.0,0.7 22.5,2.5 24.0,0.7 25.5,2.5 27.0,0.7 28.5,2.5 30.0,0.7 31.5,2.5 33.0,0.7 34.5,2.5 36.0,0.7 37.5,2.5 39.0,0.7" fill="none" stroke="#b82e2a" stroke-width="0.85"/></svg>
<div class="ln" style="left:0.3px;top:59px;">4</div>
<div class="code" style="left:49.8px;top:59px"><span class="k">import</span><span class="p"> </span><span class="ty">jakarta</span><span class="p">.</span><span class="ty">jms</span><span class="p">.</span><span class="ty">Message</span><span class="p">;</span></div>
<svg style="left:49.5px;top:69.52px" width="33.6" height="3.2"><polyline points="0.0,0.7 1.5,2.5 3.0,0.7 4.5,2.5 6.0,0.7 7.5,2.5 9.0,0.7 10.5,2.5 12.0,0.7 13.5,2.5 15.0,0.7 16.5,2.5 18.0,0.7 19.5,2.5 21.0,0.7 22.5,2.5 24.0,0.7 25.5,2.5 27.0,0.7 28.5,2.5 30.0,0.7 31.5,2.5 33.0,0.7" fill="none" stroke="#b82e2a" stroke-width="0.85"/></svg>
<svg style="left:87.6px;top:69.52px" width="39.0" height="3.2"><polyline points="0.0,0.7 1.5,2.5 3.0,0.7 4.5,2.5 6.0,0.7 7.5,2.5 9.0,0.7 10.5,2.5 12.0,0.7 13.5,2.5 15.0,0.7 16.5,2.5 18.0,0.7 19.5,2.5 21.0,0.7 22.5,2.5 24.0,0.7 25.5,2.5 27.0,0.7 28.5,2.5 30.0,0.7 31.5,2.5 33.0,0.7 34.5,2.5 36.0,0.7 37.5,2.5 39.0,0.7" fill="none" stroke="#b82e2a" stroke-width="0.85"/></svg>
<div class="ln" style="left:0.3px;top:73px;">5</div>
<div class="code" style="left:49.8px;top:73px"><span class="k">import</span><span class="p"> </span><span class="ty">jakarta</span><span class="p">.</span><span class="ty">jms</span><span class="p">.</span><span class="ty">TextMessage</span><span class="p">;</span></div>
<svg style="left:49.5px;top:83.06px" width="33.6" height="3.2"><polyline points="0.0,0.7 1.5,2.5 3.0,0.7 4.5,2.5 6.0,0.7 7.5,2.5 9.0,0.7 10.5,2.5 12.0,0.7 13.5,2.5 15.0,0.7 16.5,2.5 18.0,0.7 19.5,2.5 21.0,0.7 22.5,2.5 24.0,0.7 25.5,2.5 27.0,0.7 28.5,2.5 30.0,0.7 31.5,2.5 33.0,0.7" fill="none" stroke="#b82e2a" stroke-width="0.85"/></svg>
<svg style="left:87.6px;top:83.06px" width="39.0" height="3.2"><polyline points="0.0,0.7 1.5,2.5 3.0,0.7 4.5,2.5 6.0,0.7 7.5,2.5 9.0,0.7 10.5,2.5 12.0,0.7 13.5,2.5 15.0,0.7 16.5,2.5 18.0,0.7 19.5,2.5 21.0,0.7 22.5,2.5 24.0,0.7 25.5,2.5 27.0,0.7 28.5,2.5 30.0,0.7 31.5,2.5 33.0,0.7 34.5,2.5 36.0,0.7 37.5,2.5 39.0,0.7" fill="none" stroke="#b82e2a" stroke-width="0.85"/></svg>
<div class="ln" style="left:0.3px;top:86px;">6</div>
<div class="code" style="left:49.8px;top:86px"><span class="k">import</span><span class="p"> </span><span class="ty">jakarta</span><span class="p">.</span><span class="ty">jms</span><span class="p">.</span><span class="ty">MessageListener</span><span class="p">;</span></div>
<svg style="left:49.5px;top:96.60px" width="33.6" height="3.2"><polyline points="0.0,0.7 1.5,2.5 3.0,0.7 4.5,2.5 6.0,0.7 7.5,2.5 9.0,0.7 10.5,2.5 12.0,0.7 13.5,2.5 15.0,0.7 16.5,2.5 18.0,0.7 19.5,2.5 21.0,0.7 22.5,2.5 24.0,0.7 25.5,2.5 27.0,0.7 28.5,2.5 30.0,0.7 31.5,2.5 33.0,0.7" fill="none" stroke="#b82e2a" stroke-width="0.85"/></svg>
<svg style="left:87.6px;top:96.60px" width="39.0" height="3.2"><polyline points="0.0,0.7 1.5,2.5 3.0,0.7 4.5,2.5 6.0,0.7 7.5,2.5 9.0,0.7 10.5,2.5 12.0,0.7 13.5,2.5 15.0,0.7 16.5,2.5 18.0,0.7 19.5,2.5 21.0,0.7 22.5,2.5 24.0,0.7 25.5,2.5 27.0,0.7 28.5,2.5 30.0,0.7 31.5,2.5 33.0,0.7 34.5,2.5 36.0,0.7 37.5,2.5 39.0,0.7" fill="none" stroke="#b82e2a" stroke-width="0.85"/></svg>
<div class="ln" style="left:0.3px;top:100px;color:#ccc;font-weight:bold">7</div>
<div class="code" style="left:49.8px;top:100px"><span class="k">import</span><span class="p"> </span><span class="ty">com</span><span class="p">.</span><span class="ty">redhat</span><span class="p">.</span><span class="ty">coolstore</span><span class="p">.</span><span class="ty">model</span><span class="p">.</span><span class="ty">Order</span><span class="p">;</span></div>
<svg style="left:49.5px;top:110.14px" width="33.6" height="3.2"><polyline points="0.0,0.7 1.5,2.5 3.0,0.7 4.5,2.5 6.0,0.7 7.5,2.5 9.0,0.7 10.5,2.5 12.0,0.7 13.5,2.5 15.0,0.7 16.5,2.5 18.0,0.7 19.5,2.5 21.0,0.7 22.5,2.5 24.0,0.7 25.5,2.5 27.0,0.7 28.5,2.5 30.0,0.7 31.5,2.5 33.0,0.7" fill="none" stroke="#b82e2a" stroke-width="0.85"/></svg>
<div class="ln" style="left:0.3px;top:113px;">8</div>
<div class="code" style="left:49.8px;top:113px"><span class="k">import</span><span class="p"> </span><span class="ty">com</span><span class="p">.</span><span class="ty">redhat</span><span class="p">.</span><span class="ty">coolstore</span><span class="p">.</span><span class="ty">utils</span><span class="p">.</span><span class="ty">Transformers</span><span class="p">;</span></div>
<svg style="left:49.5px;top:123.68px" width="33.6" height="3.2"><polyline points="0.0,0.7 1.5,2.5 3.0,0.7 4.5,2.5 6.0,0.7 7.5,2.5 9.0,0.7 10.5,2.5 12.0,0.7 13.5,2.5 15.0,0.7 16.5,2.5 18.0,0.7 19.5,2.5 21.0,0.7 22.5,2.5 24.0,0.7 25.5,2.5 27.0,0.7 28.5,2.5 30.0,0.7 31.5,2.5 33.0,0.7" fill="none" stroke="#b82e2a" stroke-width="0.85"/></svg>
<div class="ln" style="left:0.3px;top:127px;">9</div>
<div class="code" style="left:49.8px;top:127px"><span class="k">import</span><span class="p"> </span><span class="ty">org.eclipse</span><span class="p">.</span><span class="ty">microprofile</span><span class="p">.</span><span class="ty">reactive</span><span class="p">.</span><span class="ty">messaging</span><span class="p">.</span><span class="ty">Incoming</span><span class="p">;</span></div>
<svg style="left:49.5px;top:137.22px" width="33.6" height="3.2"><polyline points="0.0,0.7 1.5,2.5 3.0,0.7 4.5,2.5 6.0,0.7 7.5,2.5 9.0,0.7 10.5,2.5 12.0,0.7 13.5,2.5 15.0,0.7 16.5,2.5 18.0,0.7 19.5,2.5 21.0,0.7 22.5,2.5 24.0,0.7 25.5,2.5 27.0,0.7 28.5,2.5 30.0,0.7 31.5,2.5 33.0,0.7" fill="none" stroke="#b82e2a" stroke-width="0.85"/></svg>
<svg style="left:87.6px;top:137.22px" width="60.8" height="3.2"><polyline points="0.0,0.7 1.5,2.5 3.0,0.7 4.5,2.5 6.0,0.7 7.5,2.5 9.0,0.7 10.5,2.5 12.0,0.7 13.5,2.5 15.0,0.7 16.5,2.5 18.0,0.7 19.5,2.5 21.0,0.7 22.5,2.5 24.0,0.7 25.5,2.5 27.0,0.7 28.5,2.5 30.0,0.7 31.5,2.5 33.0,0.7 34.5,2.5 36.0,0.7 37.5,2.5 39.0,0.7 40.5,2.5 42.0,0.7 43.5,2.5 45.0,0.7 46.5,2.5 48.0,0.7 49.5,2.5 51.0,0.7 52.5,2.5 54.0,0.7 55.5,2.5 57.0,0.7 58.5,2.5 60.0,0.7" fill="none" stroke="#b82e2a" stroke-width="0.85"/></svg>
<div class="ln" style="left:0.3px;top:140px;">10</div>
<div class="ln" style="left:0.3px;top:154px;">11</div>
<div class="code" style="left:49.8px;top:154px"><span class="p">@</span><span class="ty">ApplicationScoped</span></div>
<svg style="left:49.5px;top:164.30px" width="6.3" height="3.2"><polyline points="0.0,0.7 1.5,2.5 3.0,0.7 4.5,2.5 6.0,0.7" fill="none" stroke="#b82e2a" stroke-width="0.85"/></svg>
<svg style="left:54.9px;top:164.30px" width="93.4" height="3.2"><polyline points="0.0,0.7 1.5,2.5 3.0,0.7 4.5,2.5 6.0,0.7 7.5,2.5 9.0,0.7 10.5,2.5 12.0,0.7 13.5,2.5 15.0,0.7 16.5,2.5 18.0,0.7 19.5,2.5 21.0,0.7 22.5,2.5 24.0,0.7 25.5,2.5 27.0,0.7 28.5,2.5 30.0,0.7 31.5,2.5 33.0,0.7 34.5,2.5 36.0,0.7 37.5,2.5 39.0,0.7 40.5,2.5 42.0,0.7 43.5,2.5 45.0,0.7 46.5,2.5 48.0,0.7 49.5,2.5 51.0,0.7 52.5,2.5 54.0,0.7 55.5,2.5 57.0,0.7 58.5,2.5 60.0,0.7 61.5,2.5 63.0,0.7 64.5,2.5 66.0,0.7 67.5,2.5 69.0,0.7 70.5,2.5 72.0,0.7 73.5,2.5 75.0,0.7 76.5,2.5 78.0,0.7 79.5,2.5 81.0,0.7 82.5,2.5 84.0,0.7 85.5,2.5 87.0,0.7 88.5,2.5 90.0,0.7 91.5,2.5 93.0,0.7" fill="none" stroke="#b82e2a" stroke-width="0.85"/></svg>
<div class="ln" style="left:0.3px;top:167px;">12</div>
<div class="code" style="left:49.8px;top:167px"><span class="k">public</span><span class="p"> </span><span class="k">class</span><span class="p"> </span><span class="ty">OrderServiceMDB</span><span class="p"> </span><span class="b1">{</span></div>
<div class="ln" style="left:0.3px;top:181px;">13</div>
<div class="ln" style="left:0.3px;top:194px;">14</div>
<div class="code" style="left:49.8px;top:194px"><span class="p">    </span><span class="p">@</span><span class="ty">Inject</span></div>
<svg style="left:71.3px;top:204.92px" width="6.3" height="3.2"><polyline points="0.0,0.7 1.5,2.5 3.0,0.7 4.5,2.5 6.0,0.7" fill="none" stroke="#b82e2a" stroke-width="0.85"/></svg>
<svg style="left:76.7px;top:204.92px" width="33.6" height="3.2"><polyline points="0.0,0.7 1.5,2.5 3.0,0.7 4.5,2.5 6.0,0.7 7.5,2.5 9.0,0.7 10.5,2.5 12.0,0.7 13.5,2.5 15.0,0.7 16.5,2.5 18.0,0.7 19.5,2.5 21.0,0.7 22.5,2.5 24.0,0.7 25.5,2.5 27.0,0.7 28.5,2.5 30.0,0.7 31.5,2.5 33.0,0.7" fill="none" stroke="#b82e2a" stroke-width="0.85"/></svg>
<div class="ln" style="left:0.3px;top:208px;">15</div>
<div class="code" style="left:49.8px;top:208px"><span class="p">    </span><span class="ty">OrderService</span><span class="p"> </span><span class="v">orderService</span><span class="p">;</span></div>
<div class="ln" style="left:0.3px;top:222px;">16</div>
<div class="ln" style="left:0.3px;top:235px;">17</div>
<div class="code" style="left:49.8px;top:235px"><span class="p">    </span><span class="p">@</span><span class="ty">Inject</span></div>
<svg style="left:71.3px;top:245.54px" width="6.3" height="3.2"><polyline points="0.0,0.7 1.5,2.5 3.0,0.7 4.5,2.5 6.0,0.7" fill="none" stroke="#b82e2a" stroke-width="0.85"/></svg>
<svg style="left:76.7px;top:245.54px" width="33.6" height="3.2"><polyline points="0.0,0.7 1.5,2.5 3.0,0.7 4.5,2.5 6.0,0.7 7.5,2.5 9.0,0.7 10.5,2.5 12.0,0.7 13.5,2.5 15.0,0.7 16.5,2.5 18.0,0.7 19.5,2.5 21.0,0.7 22.5,2.5 24.0,0.7 25.5,2.5 27.0,0.7 28.5,2.5 30.0,0.7 31.5,2.5 33.0,0.7" fill="none" stroke="#b82e2a" stroke-width="0.85"/></svg>
<div class="ln" style="left:0.3px;top:249px;">18</div>
<div class="code" style="left:49.8px;top:249px"><span class="p">    </span><span class="ty">CatalogService</span><span class="p"> </span><span class="v">catalogService</span><span class="p">;</span></div>
<div class="ln" style="left:0.3px;top:262px;">19</div>
<div class="ln" style="left:0.3px;top:276px;">20</div>
<div class="code" style="left:49.8px;top:276px"><span class="p">    </span><span class="p">@</span><span class="ty">Incoming</span><span class="b2">(</span><span class="s">&quot;topic/orders&quot;</span><span class="b2">)</span></div>
<svg style="left:71.3px;top:286.16px" width="6.3" height="3.2"><polyline points="0.0,0.7 1.5,2.5 3.0,0.7 4.5,2.5 6.0,0.7" fill="none" stroke="#b82e2a" stroke-width="0.85"/></svg>
<svg style="left:76.7px;top:286.16px" width="44.4" height="3.2"><polyline points="0.0,0.7 1.5,2.5 3.0,0.7 4.5,2.5 6.0,0.7 7.5,2.5 9.0,0.7 10.5,2.5 12.0,0.7 13.5,2.5 15.0,0.7 16.5,2.5 18.0,0.7 19.5,2.5 21.0,0.7 22.5,2.5 24.0,0.7 25.5,2.5 27.0,0.7 28.5,2.5 30.0,0.7 31.5,2.5 33.0,0.7 34.5,2.5 36.0,0.7 37.5,2.5 39.0,0.7 40.5,2.5 42.0,0.7 43.5,2.5" fill="none" stroke="#b82e2a" stroke-width="0.85"/></svg>
<div class="ln" style="left:0.3px;top:289px;">21</div>
<div class="code" style="left:49.8px;top:289px"><span class="p">    </span><span class="k">public</span><span class="p"> </span><span class="k">void</span><span class="p"> </span><span class="f">onMessage</span><span class="b2">(</span><span class="ty">Message</span><span class="p"> </span><span class="v">rcvMessage</span><span class="b2">)</span><span class="p"> </span><span class="b2">{</span></div>
<svg style="left:191.0px;top:299.70px" width="39.0" height="3.2"><polyline points="0.0,0.7 1.5,2.5 3.0,0.7 4.5,2.5 6.0,0.7 7.5,2.5 9.0,0.7 10.5,2.5 12.0,0.7 13.5,2.5 15.0,0.7 16.5,2.5 18.0,0.7 19.5,2.5 21.0,0.7 22.5,2.5 24.0,0.7 25.5,2.5 27.0,0.7 28.5,2.5 30.0,0.7 31.5,2.5 33.0,0.7 34.5,2.5 36.0,0.7 37.5,2.5 39.0,0.7" fill="none" stroke="#b82e2a" stroke-width="0.85"/></svg>
<div class="ln" style="left:0.3px;top:303px;">22</div>
<div class="code" style="left:49.8px;top:303px"><span class="p">        </span><span class="ty">System</span><span class="p">.</span><span class="n">out</span><span class="p">.</span><span class="f">println</span><span class="b3">(</span><span class="ih">x:</span><span class="s">&quot;\nMessage recd !&quot;</span><span class="b3">)</span><span class="p">;</span></div>
<div class="ln" style="left:0.3px;top:316px;">23</div>
<div class="code" style="left:49.8px;top:316px"><span class="p">        </span><span class="ty">TextMessage</span><span class="p"> </span><span class="v">msg</span><span class="p"> = </span><span class="k">null</span><span class="p">;</span></div>
<svg style="left:93.0px;top:326.78px" width="60.8" height="3.2"><polyline points="0.0,0.7 1.5,2.5 3.0,0.7 4.5,2.5 6.0,0.7 7.5,2.5 9.0,0.7 10.5,2.5 12.0,0.7 13.5,2.5 15.0,0.7 16.5,2.5 18.0,0.7 19.5,2.5 21.0,0.7 22.5,2.5 24.0,0.7 25.5,2.5 27.0,0.7 28.5,2.5 30.0,0.7 31.5,2.5 33.0,0.7 34.5,2.5 36.0,0.7 37.5,2.5 39.0,0.7 40.5,2.5 42.0,0.7 43.5,2.5 45.0,0.7 46.5,2.5 48.0,0.7 49.5,2.5 51.0,0.7 52.5,2.5 54.0,0.7 55.5,2.5 57.0,0.7 58.5,2.5 60.0,0.7" fill="none" stroke="#b82e2a" stroke-width="0.85"/></svg>
<div class="ln" style="left:0.3px;top:330px;">24</div>
<div class="code" style="left:49.8px;top:330px"><span class="p">        </span><span class="c">try</span><span class="p"> </span><span class="b3">{</span></div>
<div class="ln" style="left:0.3px;top:343px;">25</div>
<div class="code" style="left:49.8px;top:343px"><span class="p">            </span><span class="c">if</span><span class="p"> </span><span class="b1">(</span><span class="v">rcvMessage</span><span class="p"> </span><span class="k">instanceof</span><span class="p"> </span><span class="ty">TextMessage</span><span class="b1">)</span><span class="p"> </span><span class="b1">{</span></div>
<svg style="left:256.3px;top:353.86px" width="60.8" height="3.2"><polyline points="0.0,0.7 1.5,2.5 3.0,0.7 4.5,2.5 6.0,0.7 7.5,2.5 9.0,0.7 10.5,2.5 12.0,0.7 13.5,2.5 15.0,0.7 16.5,2.5 18.0,0.7 19.5,2.5 21.0,0.7 22.5,2.5 24.0,0.7 25.5,2.5 27.0,0.7 28.5,2.5 30.0,0.7 31.5,2.5 33.0,0.7 34.5,2.5 36.0,0.7 37.5,2.5 39.0,0.7 40.5,2.5 42.0,0.7 43.5,2.5 45.0,0.7 46.5,2.5 48.0,0.7 49.5,2.5 51.0,0.7 52.5,2.5 54.0,0.7 55.5,2.5 57.0,0.7 58.5,2.5 60.0,0.7" fill="none" stroke="#b82e2a" stroke-width="0.85"/></svg>
<div class="ln" style="left:0.3px;top:357px;">26</div>
<div class="code" style="left:49.8px;top:357px"><span class="p">                </span><span class="v">msg</span><span class="p"> = </span><span class="b2">(</span><span class="ty">TextMessage</span><span class="b2">)</span><span class="p"> </span><span class="v">rcvMessage</span><span class="p">;</span></div>
<svg style="left:174.7px;top:367.40px" width="60.8" height="3.2"><polyline points="0.0,0.7 1.5,2.5 3.0,0.7 4.5,2.5 6.0,0.7 7.5,2.5 9.0,0.7 10.5,2.5 12.0,0.7 13.5,2.5 15.0,0.7 16.5,2.5 18.0,0.7 19.5,2.5 21.0,0.7 22.5,2.5 24.0,0.7 25.5,2.5 27.0,0.7 28.5,2.5 30.0,0.7 31.5,2.5 33.0,0.7 34.5,2.5 36.0,0.7 37.5,2.5 39.0,0.7 40.5,2.5 42.0,0.7 43.5,2.5 45.0,0.7 46.5,2.5 48.0,0.7 49.5,2.5 51.0,0.7 52.5,2.5 54.0,0.7 55.5,2.5 57.0,0.7 58.5,2.5 60.0,0.7" fill="none" stroke="#b82e2a" stroke-width="0.85"/></svg>
<div class="ln" style="left:0.3px;top:370px;">27</div>
<div class="code" style="left:49.8px;top:370px"><span class="p">                </span><span class="ty">String</span><span class="p"> </span><span class="v">orderStr</span><span class="p"> = </span><span class="v">msg</span><span class="p">.</span><span class="f">getBody</span><span class="b2">(</span><span class="ty">String</span><span class="p">.</span><span class="c">class</span><span class="b2">)</span><span class="p">;</span></div>
<div class="ln" style="left:0.3px;top:384px;">28</div>
<div class="code" style="left:49.8px;top:384px"><span class="p">                </span><span class="ty">System</span><span class="p">.</span><span class="n">out</span><span class="p">.</span><span class="f">println</span><span class="b2">(</span><span class="s">&quot;Received order: &quot;</span><span class="p"> + </span><span class="v">orderStr</span><span class="b2">)</span><span class="p">;</span></div>
<div class="ln" style="left:0.3px;top:398px;">29</div>
<div class="code" style="left:49.8px;top:398px"><span class="p">                </span><span class="ty">Order</span><span class="p"> </span><span class="v">order</span><span class="p"> = </span><span class="ty">Transformers</span><span class="p">.</span><span class="f">jsonToOrder</span><span class="b2">(</span><span class="v">orderStr</span><span class="b2">)</span><span class="p">;</span></div>
<div class="ln" style="left:0.3px;top:411px;">30</div>
<div class="code" style="left:49.8px;top:411px"><span class="p">                </span><span class="ty">System</span><span class="p">.</span><span class="n">out</span><span class="p">.</span><span class="f">println</span><span class="b2">(</span><span class="s">&quot;Order object is &quot;</span><span class="p"> + </span><span class="v">order</span><span class="b2">)</span><span class="p">;</span></div>
<div class="ln" style="left:0.3px;top:425px;">31</div>
<div class="code" style="left:49.8px;top:425px"><span class="p">                </span><span class="v">orderService</span><span class="p">.</span><span class="f">save</span><span class="b2">(</span><span class="v">order</span><span class="b2">)</span><span class="p">;</span></div>
<div class="ln" style="left:0.3px;top:438px;">32</div>
<div class="code" style="left:49.8px;top:438px"><span class="p">                </span><span class="v">order</span><span class="p">.</span><span class="f">getItemList</span><span class="b2">()</span><span class="p">.</span><span class="f">forEach</span><span class="b2">(</span><span class="v">orderItem</span><span class="p"> </span><span class="k">-&gt;</span><span class="p"> </span><span class="b3">{</span></div>
<div class="ln" style="left:0.3px;top:452px;">33</div>
<div class="code" style="left:49.8px;top:452px"><span class="p">                    </span><span class="v">catalogService</span><span class="p">.</span><span class="f">updateInventoryItems</span><span class="b1">(</span><span class="v">orderItem</span><span class="p">.</span><span class="f">getProductId</span><span class="b2">()</span><span class="p">, </span><span class="v">orderItem</span><span class="p">.</span><span class="f">getQuantity</span><span class="b2">()</span><span class="b1">)</span><span class="p">;</span></div>
<div class="ln" style="left:0.3px;top:465px;">34</div>
<div class="code" style="left:49.8px;top:465px"><span class="p">                </span><span class="b3">}</span><span class="b2">)</span><span class="p">;</span></div>
<div class="ln" style="left:0.3px;top:479px;">35</div>
<div class="code" style="left:49.8px;top:479px"><span class="p">            </span><span class="b1">}</span></div>
<div class="ln" style="left:0.3px;top:492px;">36</div>
<div class="code" style="left:49.8px;top:492px"><span class="p">        </span><span class="b3">}</span><span class="p"> </span><span class="c">catch</span><span class="p"> </span><span class="b3">(</span><span class="ty">Exception</span><span class="p"> </span><span class="v">e</span><span class="b3">)</span><span class="p"> </span><span class="b3">{</span></div>
<div class="ln" style="left:0.3px;top:506px;">37</div>
<div class="code" style="left:49.8px;top:506px"><span class="p">            </span><span class="c">throw</span><span class="p"> </span><span class="k">new</span><span class="p"> </span><span class="f">RuntimeException</span><span class="b1">(</span><span class="v">e</span><span class="b1">)</span><span class="p">;</span></div>
<div class="ln" style="left:0.3px;top:519px;">38</div>
<div class="code" style="left:49.8px;top:519px"><span class="p">        </span><span class="b3">}</span></div>
<svg style="left:50.8px;top:204.6px" width="7" height="3.2"><polyline points="0,2.4 1.5,0.8 3,2.2 4.5,0.6 6,1.2" fill="none" stroke="#b82e2a" stroke-width="0.85"/></svg>
<svg style="left:50.8px;top:218.2px" width="7" height="3.2"><polyline points="0,2.4 1.5,0.8 3,2.2 4.5,0.6 6,1.2" fill="none" stroke="#b82e2a" stroke-width="0.85"/></svg>
<svg style="left:50.8px;top:245.2px" width="7" height="3.2"><polyline points="0,2.4 1.5,0.8 3,2.2 4.5,0.6 6,1.2" fill="none" stroke="#b82e2a" stroke-width="0.85"/></svg>
<svg style="left:51.5px;top:85.8px" width="9" height="11" viewBox="0 0 9 11"><circle cx="4.5" cy="4" r="3.6" fill="#e9dcae"/><rect x="3" y="7.2" width="3" height="2.6" rx="0.6" fill="#c9b27a"/></svg>
<div class="abs" style="left:925.7px;top:40.2px;width:87.0px;height:5.5px;background:#4e1313;"></div>
<div class="abs" style="left:925.7px;top:45.7px;width:87.0px;height:5.1px;background:#7c1c1c;"></div>
<div class="abs" style="left:925.7px;top:50.8px;width:87.0px;height:3.4px;background:#4e1313;"></div>
<div class="abs" style="left:925.7px;top:54.2px;width:87.0px;height:3.2px;background:#801d1d;"></div>
<div class="abs" style="left:922.6px;top:40.5px;width:2.6px;height:33.5px;background:#174a78;"></div>
<div class="abs" style="left:922.6px;top:74.0px;width:2.6px;height:3.0px;background:#6a2a1a;"></div>
<div class="abs" style="left:929.0px;top:41.6px;width:14.0px;height:1.3px;background:#a24a44;opacity:.6"></div>
<div class="abs" style="left:933.0px;top:43.4px;width:20.0px;height:1.3px;background:#7a5a58;opacity:.6"></div>
<div class="abs" style="left:928.0px;top:47.0px;width:10.0px;height:1.3px;background:#c06058;opacity:.6"></div>
<div class="abs" style="left:932.0px;top:48.6px;width:26.0px;height:1.3px;background:#a05550;opacity:.6"></div>
<div class="abs" style="left:932.0px;top:50.2px;width:8.0px;height:1.3px;background:#b06a60;opacity:.6"></div>
<div class="abs" style="left:935.0px;top:52.4px;width:18.0px;height:1.3px;background:#8a4a44;opacity:.6"></div>
<div class="abs" style="left:937.0px;top:55.0px;width:12.0px;height:1.3px;background:#c05050;opacity:.6"></div>
<div class="abs" style="left:953.0px;top:55.0px;width:12.0px;height:1.3px;background:#b04848;opacity:.6"></div>
<div class="abs" style="left:938.0px;top:58.4px;width:36.0px;height:1.3px;background:#2f6f62;opacity:.6"></div>
<div class="abs" style="left:938.0px;top:59.8px;width:28.0px;height:1.3px;background:#2d6a80;opacity:.6"></div>
<div class="abs" style="left:938.0px;top:61.2px;width:34.0px;height:1.3px;background:#3a7a6a;opacity:.6"></div>
<div class="abs" style="left:938.0px;top:62.6px;width:22.0px;height:1.3px;background:#2f6a7a;opacity:.6"></div>
<div class="abs" style="left:939.0px;top:64.0px;width:26.0px;height:1.3px;background:#356f66;opacity:.6"></div>
<div class="abs" style="left:941.0px;top:66.4px;width:46.0px;height:1.3px;background:#3d6f7a;opacity:.6"></div>
<div class="abs" style="left:989.0px;top:66.4px;width:17.0px;height:1.3px;background:#45626e;opacity:.6"></div>
<div class="abs" style="left:938.0px;top:68.0px;width:3.0px;height:1.3px;background:#555;opacity:.6"></div>
<div class="abs" style="left:933.0px;top:70.6px;width:8.0px;height:1.3px;background:#5a4a6a;opacity:.6"></div>
<div class="abs" style="left:939.0px;top:71.4px;width:18.0px;height:1.3px;background:#4a6a60;opacity:.6"></div>
<div class="abs" style="left:929.0px;top:73.4px;width:2.0px;height:1.3px;background:#555;opacity:.6"></div>
<div class="abs" style="left:1013.6px;top:40.5px;width:3.4px;height:16.0px;background:#184673;"></div>
<div class="abs" style="left:1013.6px;top:83.0px;width:3.4px;height:14.0px;background:#184673;"></div>
<div class="abs" style="left:1013.6px;top:103.0px;width:3.4px;height:14.0px;background:#184673;"></div>
<div class="abs" style="left:1013.6px;top:123.0px;width:3.4px;height:14.0px;background:#184673;"></div>
<div class="abs" style="left:1013.6px;top:143.0px;width:3.4px;height:126.0px;background:#184673;"></div>
<div class="abs" style="left:1013.6px;top:70.0px;width:3.4px;height:7.5px;background:#46622a;"></div>
<div class="abs" style="left:1013.6px;top:269.0px;width:3.4px;height:7.0px;background:#8a5656;"></div>
<div class="abs" style="left:1013.6px;top:282.0px;width:3.4px;height:7.0px;background:#3a5428;"></div>
<div class="abs" style="left:1019.4px;top:40.5px;width:3.6px;height:36.5px;background:#702320;"></div>
<div class="abs" style="left:1019.4px;top:83.0px;width:3.6px;height:8.0px;background:#702320;"></div>
<div class="abs" style="left:1019.4px;top:103.0px;width:3.6px;height:7.0px;background:#702320;"></div>
<div class="abs" style="left:1019.4px;top:123.0px;width:3.6px;height:7.0px;background:#702320;"></div>
<div class="abs" style="left:1019.4px;top:143.0px;width:3.6px;height:7.0px;background:#702320;"></div>
<div class="abs" style="left:1019.4px;top:163.0px;width:3.6px;height:7.0px;background:#702320;"></div>
<div class="abs" style="left:1019.4px;top:177.0px;width:3.6px;height:13.0px;background:#702320;"></div>
<div class="abs" style="left:1012.5px;top:56.2px;width:7.5px;height:1.8px;background:#b8b8b8;"></div></div>
<div class="abs" id="panel"><div class="t" style="left:15.4px;top:6.2px;font-size:8.25px;color:#9a9a9a;letter-spacing:-0.24px">PROBLEMS</div>
<div class="t" style="left:102.4px;top:6.2px;font-size:8.25px;color:#e4e4e4;letter-spacing:0.06px">OUTPUT</div>
<div class="t" style="left:155.4px;top:6.2px;font-size:8.25px;color:#9a9a9a;letter-spacing:-0.15px">DEBUG CONSOLE</div>
<div class="t" style="left:245.4px;top:6.2px;font-size:8.25px;color:#9a9a9a;letter-spacing:-0.22px">TERMINAL</div>
<div class="t" style="left:305.0px;top:6.2px;font-size:8.25px;color:#9a9a9a;letter-spacing:-0.27px">PORTS</div>
<div class="t" style="left:350.4px;top:6.2px;font-size:8.25px;color:#9a9a9a;letter-spacing:0.02px">KAIFIX BY MTA</div>
<div class="abs" style="left:67.5px;top:3.7px;width:18.5px;height:14px;border-radius:7px;background:#5d5d5d;color:#f0f0f0;font-size:8px;line-height:14px;text-align:center">43</div>
<div class="abs" style="left:101.0px;top:19.0px;width:38px;height:1.2px;background:#1a5590"></div>
<div class="abs" style="left:789.0px;top:4.4px;width:127.5px;height:13.6px;border-radius:3px;background:#2e2e2e;border:1px solid #373737"></div>
<div class="t" style="left:795.6px;top:5.4px;font-size:8.6px;color:#d8d8d8">Tasks</div>
<svg style="left:901.5px;top:7.8px" width="9" height="7" viewBox="0 0 9 7"><path d="M1 1.6 L4.5 5.2 L8 1.6" fill="none" stroke="#d0d0d0" stroke-width="1.1"/></svg>
<svg style="left:923.0px;top:6.3px" width="11" height="10" viewBox="0 0 11 10"><g stroke="#9a9a9a" stroke-width="1.1"><path d="M0.5 1.2 h10 M0.5 3.6 h10 M0.5 6 h10 M0.5 8.4 h6"/></g><path d="M8 7.4 l2.4 2 v-2.4z" fill="#bbb"/></svg>
<svg style="left:942.0px;top:4.3px" width="11" height="13" viewBox="0 0 11 13"><g fill="none" stroke="#b8b8b8" stroke-width="1.2"><rect x="1" y="5.6" width="9" height="6.2" rx="1.2"/><path d="M2.8 5.4 V3.8 a2.7 2.7 0 0 1 5.4 0 V5.4"/></g><path d="M1.6 8.6 h7.8" stroke="#b8b8b8" stroke-width="1"/></svg>
<svg style="left:961.5px;top:9.3px" width="12" height="4" viewBox="0 0 12 4"><circle cx="1.6" cy="2" r="0.9" fill="#b8b8b8"/><circle cx="5.6" cy="2" r="0.9" fill="#b8b8b8"/><circle cx="9.6" cy="2" r="0.9" fill="#b8b8b8"/></svg>
<svg style="left:982.0px;top:7.8px" width="9" height="7" viewBox="0 0 9 7"><path d="M1 5.4 L4.5 1.8 L8 5.4" fill="none" stroke="#b8b8b8" stroke-width="1.1"/></svg>
<svg style="left:1002.0px;top:7.3px" width="8" height="8" viewBox="0 0 8 8"><path d="M1 1 L7 7 M7 1 L1 7" fill="none" stroke="#d8d8d8" stroke-width="1.1"/></svg>
<div class="abs" style="left:1013.0px;top:24.0px;width:10px;height:1.6px;background:#4a4a4a"></div>
<div class="abs" style="left:675.0px;top:105.0px;width:341.5px;height:34.2px;border-radius:3px;background:#1d1d1d;border:1px solid #1f1f1f;box-shadow:0 0 4px rgba(0,0,0,.5)"></div>
<svg style="left:683.5px;top:117.0px" width="12" height="12" viewBox="0 0 12 12"><circle cx="6" cy="6" r="5" fill="none" stroke="#2f7fd0" stroke-width="1.1"/><path d="M6 5.2 V8.8 M6 3 V4.1" stroke="#2f7fd0" stroke-width="1.1"/></svg>
<div class="t" style="left:699.2px;top:116.3px;font-size:9.75px;color:#d0d0d0;letter-spacing:0.22px">Changes applied successfully.</div></div>
<div class="abs" id="status"><div class="abs" style="left:0;top:1.2px;width:26px;height:17px;background:#3e7bdc"></div>
<svg style="left:8.0px;top:3.8px" width="10" height="10" viewBox="0 0 10 10"><path d="M2.2 3.6 L4.6 5.9 L2.2 8.2 M7.8 1.8 L5.4 4.1 L7.8 6.4" fill="none" stroke="#dfe6fa" stroke-width="0.95"/></svg>
<svg style="left:31.0px;top:2.3px" width="8" height="12" viewBox="0 0 8 12"><g fill="none" stroke="#d2d2d2" stroke-width="1"><circle cx="2" cy="2.2" r="1.3"/><circle cx="2" cy="9.8" r="1.3"/><circle cx="6" cy="4" r="1.3"/><path d="M2 3.6 V8.4 M6 5.4 c0 2.2 -4 1.4 -4 3"/></g></svg>
<div class="t" style="left:43.4px;top:2.2px;font-size:9px;color:#d2d2d2;letter-spacing:0.17px">main*</div>
<svg style="left:72.5px;top:3.3px" width="11" height="10" viewBox="0 0 11 10"><g fill="none" stroke="#d2d2d2" stroke-width="1"><path d="M1.6 5 a3.9 3.9 0 0 1 7 -2.2 M9.4 5 a3.9 3.9 0 0 1 -7 2.2"/><path d="M8.8 0.8 v2.2 h-2.2 M2.2 9.2 v-2.2 h2.2"/></g></svg>
<svg style="left:93.5px;top:3.3px" width="10" height="10" viewBox="0 0 10 10"><g fill="none" stroke="#d2d2d2" stroke-width="1"><circle cx="5" cy="5" r="4.2"/><path d="M3.4 3.4 L6.6 6.6 M6.6 3.4 L3.4 6.6"/></g></svg>
<div class="t" style="left:107.4px;top:2.2px;font-size:9px;color:#d2d2d2;letter-spacing:-0.60px">41</div>
<svg style="left:120.0px;top:3.3px" width="11" height="10" viewBox="0 0 11 10"><g fill="none" stroke="#d2d2d2" stroke-width="1" stroke-linejoin="round"><path d="M5.5 1 L10.2 9.2 H0.8z"/><path d="M5.5 4 v2.6 M5.5 7.4 v1"/></g></svg>
<div class="t" style="left:133.4px;top:2.2px;font-size:9px;color:#d2d2d2;letter-spacing:-0.32px">2</div>
<svg style="left:151.0px;top:3.3px" width="10" height="10" viewBox="0 0 10 10"><g fill="none" stroke="#d2d2d2" stroke-width="1"><path d="M5 4.4 L2.6 9.6 M5 4.4 L7.4 9.6 M3.6 7.6 h2.8"/><circle cx="5" cy="3.4" r="1"/><path d="M2.4 1 a3.6 3.6 0 0 0 0 4.8 M7.6 1 a3.6 3.6 0 0 1 0 4.8"/></g></svg>
<div class="t" style="left:164.9px;top:2.2px;font-size:9px;color:#d2d2d2;letter-spacing:0.18px">0</div>
<svg style="left:181.0px;top:2.8px" width="13" height="11" viewBox="0 0 13 11"><g fill="none" stroke="#d2d2d2" stroke-width="1"><path d="M1.6 4.2 h7.4 v2.6 a3.2 3.2 0 0 1 -3.2 3.2 h-1 a3.2 3.2 0 0 1 -3.2 -3.2z"/><path d="M9 5 h1 a1.4 1.4 0 0 1 0 2.8 h-1.2"/><path d="M3.6 2.6 c0 -1 1 -1 1 -2 M6.2 2.6 c0 -1 1 -1 1 -2"/></g></svg>
<div class="t" style="left:196.4px;top:2.2px;font-size:9px;color:#d2d2d2;letter-spacing:-0.03px">Java: Ready</div>
<div class="t" style="left:1004.2px;top:2.2px;font-size:9px;color:#d2d2d2;letter-spacing:0.21px">Ln 7, Col 1</div>
<div class="t" style="left:1062.9px;top:2.2px;font-size:9px;color:#d2d2d2;letter-spacing:0.15px">Spaces: 4</div>
<div class="t" style="left:1116.9px;top:2.2px;font-size:9px;color:#d2d2d2;letter-spacing:0.50px">UTF-8</div>
<div class="t" style="left:1156.9px;top:2.2px;font-size:9px;color:#d2d2d2;letter-spacing:-0.60px">LF</div>
<div class="t" style="left:1179.4px;top:2.2px;font-size:9px;color:#d2d2d2;letter-spacing:1.18px">{}</div>
<div class="t" style="left:1192.9px;top:2.2px;font-size:9px;color:#d2d2d2;letter-spacing:-0.11px">Java</div>
<svg style="left:1223.0px;top:3.3px" width="10" height="10" viewBox="0 0 10 10"><g fill="none" stroke="#d2d2d2" stroke-width="1"><circle cx="5" cy="5" r="4.2"/><path d="M2.2 7.8 L7.8 2.2"/></g></svg>
<div class="t" style="left:1235.4px;top:2.2px;font-size:9px;color:#d2d2d2;letter-spacing:0.38px">Prettier</div>
<svg style="left:1279.5px;top:2.8px" width="10" height="11" viewBox="0 0 10 11"><g fill="none" stroke="#d2d2d2" stroke-width="1"><path d="M1.4 8 c1.2 -1 0.8 -3 1 -4.2 a2.7 2.7 0 0 1 5.2 0 c0.2 1.2 -0.2 3.2 1 4.2z M4 9.4 h2"/></g><circle cx="8" cy="2.4" r="1.7" fill="#d8d8d8"/></svg></div>
<div class="abs" style="left:26px;top:730px;width:1274px;height:1px;background:#4c4c4c"></div>
<svg style="left:162.5px;top:246.5px" width="12" height="14" viewBox="0 0 12 14"><path d="M3.6 1.2 a1 1 0 0 1 2 0 V6 l3.6 0.7 a1.4 1.4 0 0 1 1.1 1.6 l-0.6 3.4 a1.6 1.6 0 0 1 -1.6 1.3 H5.4 a2 2 0 0 1 -1.6 -0.8 L1 8.6 a0.9 0.9 0 0 1 1.4 -1.1 l1.2 1.1z" fill="#f4f4f4" stroke="#222" stroke-width="0.7"/></svg>
<svg style="left:0;top:725px" width="6" height="6" viewBox="0 0 6 6"><path d="M0 0 V6 H6 A6 6 0 0 1 0 0z" fill="#9a9a90"/></svg>
<svg style="left:1294px;top:725px" width="6" height="6" viewBox="0 0 6 6"><path d="M6 0 V6 H0 A6 6 0 0 0 6 0z" fill="#6a6a6a"/></svg>
</div>
<div class="abs" style="left:1068.8px;top:35.4px;width:231.2px;height:31.6px;background:linear-gradient(#0026ff 0,#0026ff 30.2px,#001a9a 31.6px)"></div>
<div class="abs" style="left:1068.8px;top:67.4px;width:231.2px;height:2.6px;background:#b0aeaa"></div>
<div class="abs" style="left:1072px;top:38px;width:228px;height:26px;background:#0026ff;filter:url(#bl)"><div class="t" style="left:6.6px;top:2.2px;font-size:16.4px;line-height:20px;height:20px;color:#f0f2ff;letter-spacing:0.28px">Power of LLM + Konveyor AI</div></div>
</body></html>
